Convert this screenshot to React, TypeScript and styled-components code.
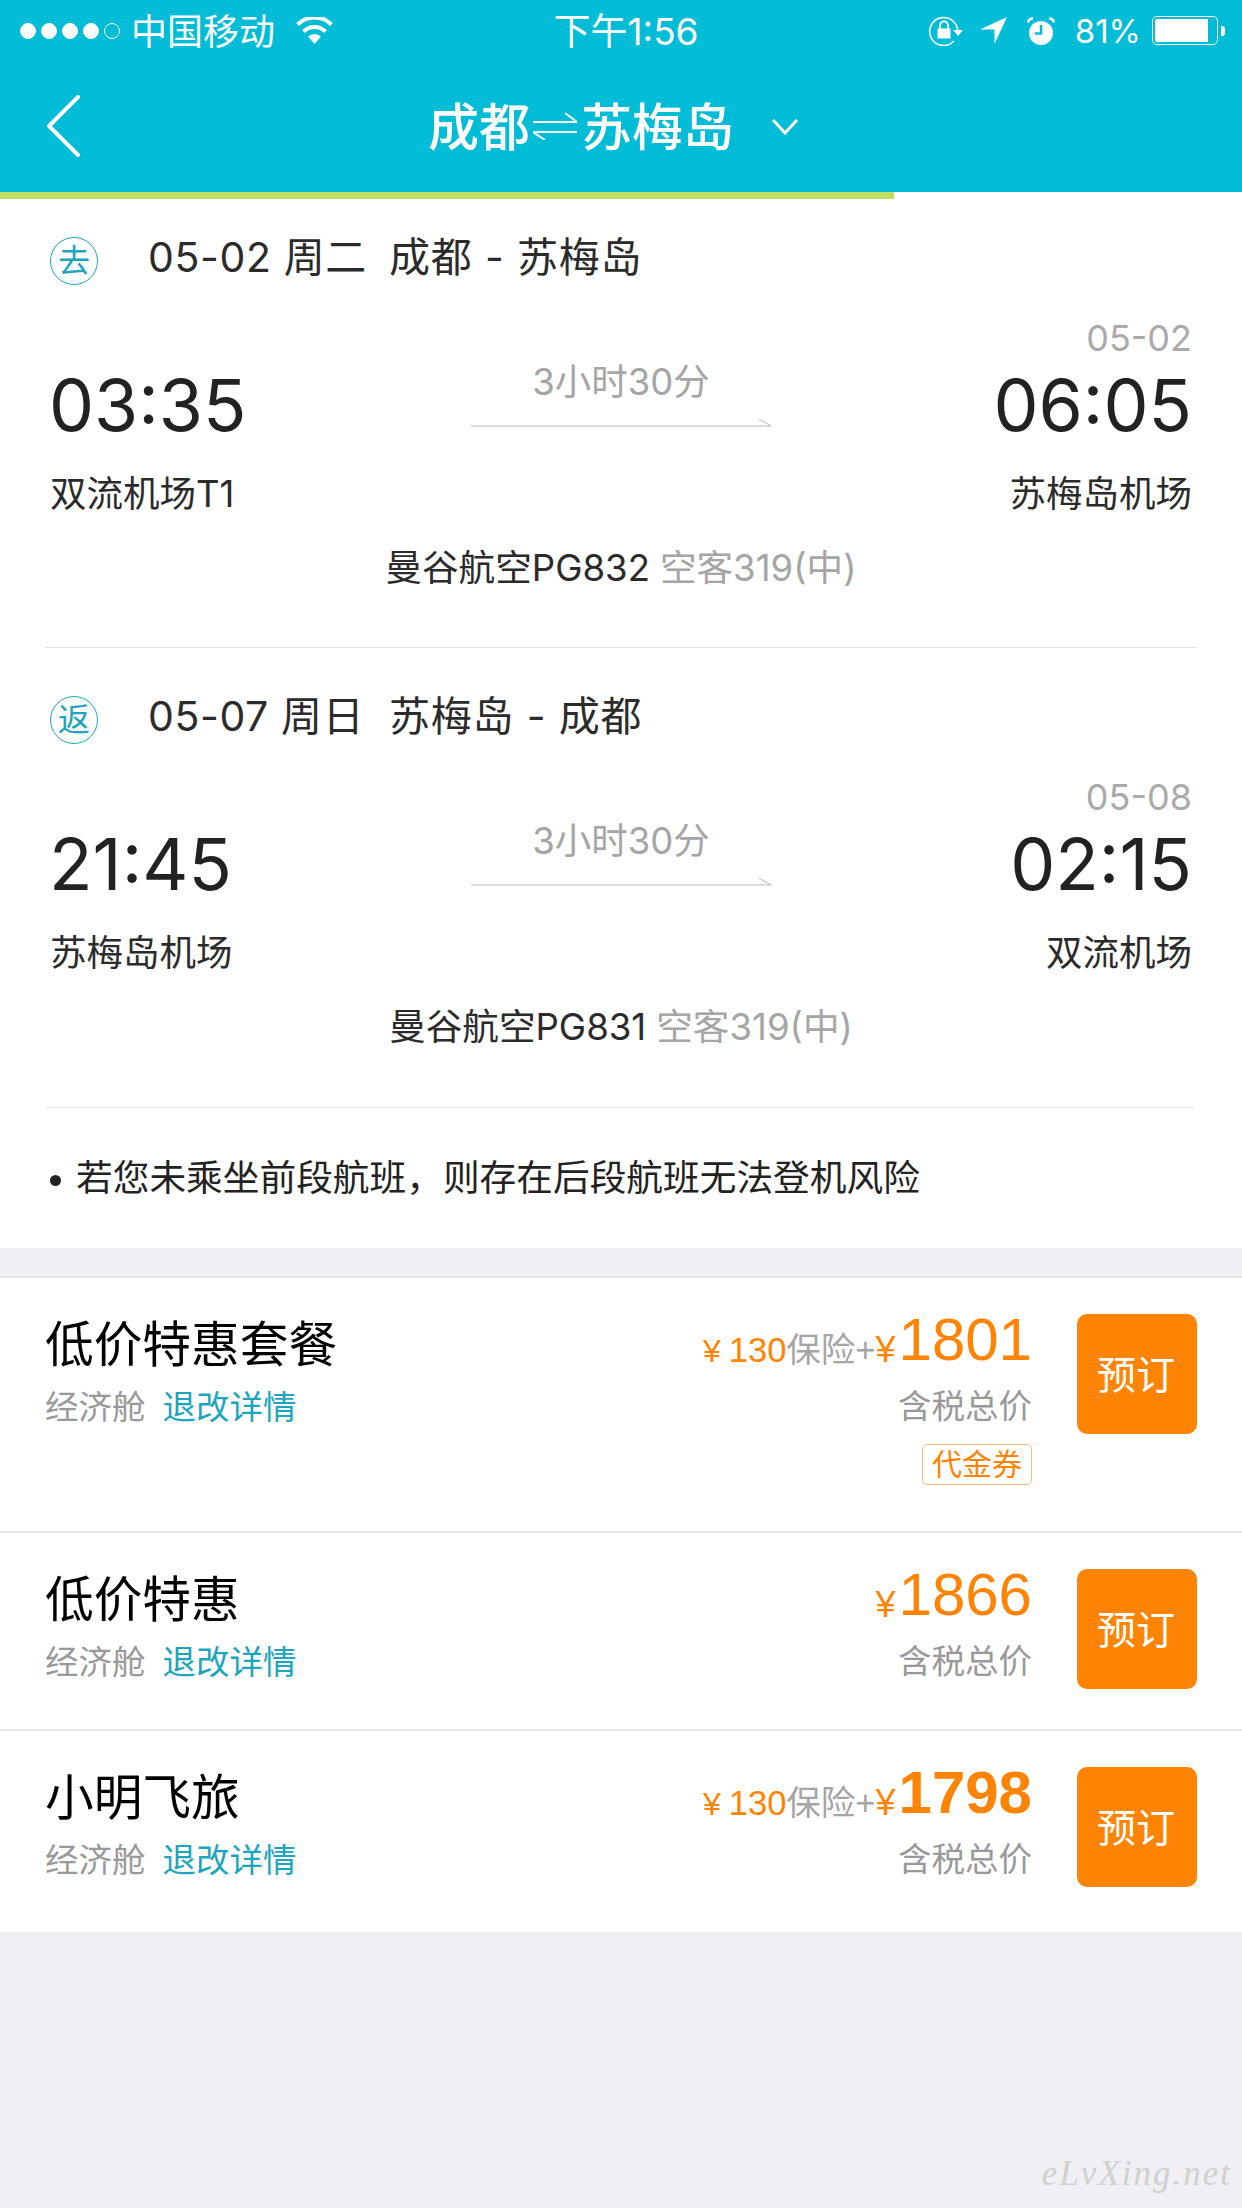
import styled, { createGlobalStyle } from 'styled-components';

const FONT = 'Inter, "Noto Sans CJK SC", sans-serif';
const PRICE_FONT = '"Liberation Sans", "Noto Sans CJK SC", sans-serif';

const GlobalStyle = createGlobalStyle`
    html, body {
        margin: 0;
        padding: 0;
        background: #efeff4;
    }
    * {
        box-sizing: border-box;
    }
`;

const Page = styled.div`
    position: relative;
    width: 1242px;
    height: 2208px;
    overflow: hidden;
    background: #efeff4;
    font-family: ${FONT};
    color: #222;
`;

const Header = styled.header`
    height: 192px;
    background: #00bcd6;
    color: #fff;
`;

const StatusBar = styled.div`
    height: 64px;
    display: grid;
    grid-template-columns: 1fr auto 1fr;
    align-items: center;
    padding-bottom: 3px;
    font-size: 36px;
`;

const StatusLeft = styled.div`
    display: flex;
    align-items: center;
    padding-left: 20px;
`;

const Dots = styled.div`
    display: flex;
    gap: 5px;
    margin-right: 11px;
`;

const Dot = styled.span<{ $empty?: boolean }>`
    width: 16px;
    height: 16px;
    border-radius: 50%;
    border: 1px solid #fff;
    background: ${props => (props.$empty ? 'transparent' : '#fff')};
`;

const Carrier = styled.span`
    margin: 0 21px 4px 0;
`;

const StatusTime = styled.div`
    padding-left: 10px;
    margin-bottom: 4px;
    font-size: 37px;
`;

const StatusRight = styled.div`
    display: flex;
    align-items: center;
    justify-content: flex-end;
    padding-right: 17px;
`;

const Percent = styled.span`
    font-size: 33px;
    margin: 0 11px 0 20px;
`;

const Battery = styled.div`
    width: 66px;
    height: 29px;
    border: 1px solid #fff;
    border-radius: 5px;
    padding: 2px;
    margin-right: 3px;
`;

const BatteryFill = styled.div`
    width: 53px;
    height: 100%;
    background: #fff;
    border-radius: 2px 0 0 2px;
`;

const BatteryNub = styled.div`
    width: 4px;
    height: 10px;
    background: #fff;
    border-radius: 0 3px 3px 0;
`;

const NavBar = styled.div`
    height: 128px;
    display: flex;
    align-items: center;
    padding: 0 0 4px 46px;
`;

const Title = styled.div`
    display: flex;
    align-items: center;
    margin-left: 348px;
    font-size: 51px;
    font-weight: 500;
`;

const TitleText = styled.span`
    margin-bottom: 5px;
`;

const TitleArrows = styled.svg`
    width: 44px;
    height: 28px;
    margin: 0 4px 0 3px;
`;

const TitleCaret = styled.svg`
    width: 28px;
    height: 17px;
    margin-left: 37px;
`;

const ProgressTrack = styled.div`
    height: 7px;
    background: #fff;
`;

const ProgressFill = styled.div`
    width: 894px;
    height: 100%;
    background: #bfdf62;
`;

const FlightPanel = styled.section`
    background: #fff;
    height: 1049px;
`;

const Leg = styled.div<{ $height: number; $top: number }>`
    height: ${props => props.$height}px;
    padding: ${props => props.$top}px 50px 0;
`;

const LegDivider = styled.div<{ $left: number; $right: number }>`
    height: 1px;
    margin: 0 ${props => props.$right}px 0 ${props => props.$left}px;
    background: #e2e2e2;
`;

const DateRow = styled.div`
    height: 122px;
    display: flex;
    align-items: center;
    padding-bottom: 12px;
    font-size: 41px;
    color: #2b2b2b;
`;

const Badge = styled.span`
    width: 48px;
    height: 48px;
    flex: none;
    display: flex;
    align-items: center;
    justify-content: center;
    margin: 14px 50px 0 0;
    border: 1.5px solid #1ca5bc;
    border-radius: 50%;
    color: #1ca5bc;
    font-size: 32px;
    line-height: 1;
`;

const DateText = styled.span`
    width: 241px;
    letter-spacing: 0.6px;
    white-space: pre;
`;

const RouteText = styled.span`
    white-space: pre;
    letter-spacing: 0.8px;
`;

const TimesRow = styled.div`
    display: grid;
    grid-template-columns: 1fr 301px 1fr;
    height: 212px;
`;

const TimeBlock = styled.div<{ $right?: boolean }>`
    display: flex;
    flex-direction: column;
    align-items: ${props => (props.$right ? 'flex-end' : 'flex-start')};
`;

const ArrivalDay = styled.div`
    height: 34px;
    line-height: 34px;
    font-size: 36px;
    color: #aaa;
`;

const Clock = styled.div`
    height: 76px;
    margin: 12px 0 0 -1px;
    line-height: 76px;
    font-size: 71.5px;
    color: #222;
`;

const Airport = styled.div`
    margin-top: 26px;
    height: 50px;
    line-height: 50px;
    font-size: 36.5px;
    color: #2b2b2b;
`;

const DurationBlock = styled.div`
    display: flex;
    flex-direction: column;
    align-items: center;
    padding-top: 39px;
`;

const Duration = styled.div`
    height: 44px;
    line-height: 44px;
    font-size: 36.5px;
    color: #a5a5a5;
`;

const DurationArrow = styled.svg`
    width: 301px;
    height: 10px;
    margin-top: 13px;
`;

const FlightInfo = styled.div`
    height: 50px;
    line-height: 50px;
    margin-top: 10px;
    text-align: center;
    font-size: 36.6px;
    color: #2b2b2b;
`;

const FlightPlane = styled.span`
    color: #a5a5a5;
    margin-left: 10px;
`;

const Notice = styled.div`
    display: flex;
    align-items: center;
    height: 139px;
    padding: 0 0 5px 50px;
    font-size: 36.7px;
    color: #222;
`;

const NoticeDot = styled.span`
    width: 11px;
    height: 11px;
    border-radius: 50%;
    background: #222;
    margin: 10px 15px 0 0;
`;

const FareList = styled.section`
    margin-top: 28px;
    background: #fff;
    border-top: 2px solid #e4e4e4;
`;

const FareRow = styled.div<{ $height: number; $last?: boolean }>`
    height: ${props => props.$height}px;
    display: flex;
    justify-content: space-between;
    padding: 36px 45px 0 45px;
    border-bottom: ${props => (props.$last ? 'none' : '2px solid #e4e4e4')};
`;

const FareInfo = styled.div`
    display: flex;
    flex-direction: column;
    margin-top: 2px;
`;

const FareName = styled.div`
    height: 58px;
    line-height: 58px;
    font-size: 48.7px;
    color: #000;
`;

const FareMeta = styled.div`
    margin-top: 11px;
    height: 44px;
    line-height: 44px;
    font-size: 33.5px;
    color: #999;
`;

const FareLink = styled.span`
    margin-left: 17px;
    color: #1ca5bc;
`;

const FareSide = styled.div`
    display: flex;
    gap: 45px;
`;

const PriceBlock = styled.div`
    display: flex;
    flex-direction: column;
    align-items: flex-end;
`;

const PriceLine = styled.div`
    height: 58px;
    margin-top: -1px;
    display: flex;
    align-items: baseline;
    font-family: ${PRICE_FONT};
    font-size: 34.5px;
    line-height: 58px;
    color: #ff8403;
`;

const Insurance = styled.span`
    color: #a5a5a5;
`;

const Yen = styled.span`
    font-size: 32px;
    margin-right: 8px;
`;

const AmountYen = styled.span`
    font-size: 36px;
    margin-right: 3px;
`;

const Amount = styled.span<{ $bold?: boolean }>`
    font-size: 60px;
    font-weight: ${props => (props.$bold ? 700 : 400)};
    transform: translateY(-2px);
`;

const PriceNote = styled.div`
    margin-top: 13px;
    height: 44px;
    line-height: 44px;
    font-size: 33.5px;
    color: #999;
`;

const Voucher = styled.span`
    margin-top: 16px;
    width: 110px;
    height: 41px;
    line-height: 38px;
    text-align: center;
    border: 1px solid #ffb980;
    border-radius: 5px;
    font-size: 30px;
    color: #ff8403;
`;

const BookButton = styled.button`
    width: 120px;
    height: 120px;
    padding: 0 2px 4px 0;
    border: none;
    border-radius: 10px;
    background: #ff8403;
    color: #fff;
    font-family: ${FONT};
    font-size: 39px;
`;

const Watermark = styled.div`
    position: absolute;
    right: 10px;
    bottom: 14px;
    font-family: 'Liberation Serif', serif;
    font-style: italic;
    font-size: 35px;
    letter-spacing: 2px;
    color: #d0d0d0;
`;

const legs = [
    {
        badge: '去',
        date: '05-02 周二',
        route: '成都 - 苏梅岛',
        depart: '03:35',
        from: '双流机场T1',
        arriveDay: '05-02',
        arrive: '06:05',
        to: '苏梅岛机场',
        flight: '曼谷航空PG832',
        height: 448,
        top: 0,
        dividerLeft: 45,
        dividerRight: 45,
    },
    {
        badge: '返',
        date: '05-07 周日',
        route: '苏梅岛 - 成都',
        depart: '21:45',
        from: '苏梅岛机场',
        arriveDay: '05-08',
        arrive: '02:15',
        to: '双流机场',
        flight: '曼谷航空PG831',
        height: 459,
        top: 10,
        dividerLeft: 46,
        dividerRight: 48,
    },
];

const fares = [
    { name: '低价特惠套餐', insurance: true, price: '1801', voucher: true, height: 255 },
    { name: '低价特惠', insurance: false, price: '1866', voucher: false, height: 198 },
    { name: '小明飞旅', insurance: true, price: '1798', bold: true, voucher: false, height: 201 },
];

const WifiIcon = () => (
    <svg width="37" height="27" viewBox="0 0 37 27">
        <path d="M18.5 27l-6.5-7.5a9.5 9.5 0 0 1 13 0z" fill="#fff" />
        <path d="M7.5 14.5a15.5 15.5 0 0 1 22 0M1.5 7.5a24 24 0 0 1 34 0" fill="none" stroke="#fff" strokeWidth="4" />
    </svg>
);

const RotationIcon = () => (
    <svg width="35" height="31" viewBox="0 0 35 31" style={{ marginRight: 17 }}>
        <path d="M29.5 19A14 14 0 1 0 26 26" fill="none" stroke="#fff" strokeWidth="1.6" />
        <path d="M25 15h10l-5 6z" fill="#fff" />
        <rect x="9.5" y="13.5" width="13" height="10" fill="#fff" />
        <path d="M12 14v-3.500a4 4 0 0 1 8 0V14" fill="none" stroke="#fff" strokeWidth="2" />
    </svg>
);

const LocationIcon = () => (
    <svg width="27" height="27" viewBox="0 0 27 27" style={{ marginRight: 20 }}>
        <path d="M27 0L14.500 27V12.500H0z" fill="#fff" />
    </svg>
);

const AlarmIcon = () => (
    <svg width="28" height="28" viewBox="0 0 28 28">
        <circle cx="14" cy="16" r="12" fill="#fff" />
        <path d="M1 5.500a5 5 0 0 1 5-4M27 5.500a5 5 0 0 0-5-4" fill="none" stroke="#fff" strokeWidth="2.500" />
        <path d="M14 8v8.500H8" fill="none" stroke="#00bcd6" strokeWidth="2.500" />
    </svg>
);

const App = () => {
    return (
        <Page>
            <GlobalStyle />
            <Header>
                <StatusBar>
                    <StatusLeft>
                        <Dots>
                            <Dot />
                            <Dot />
                            <Dot />
                            <Dot />
                            <Dot $empty />
                        </Dots>
                        <Carrier>中国移动</Carrier>
                        <WifiIcon />
                    </StatusLeft>
                    <StatusTime>下午1:56</StatusTime>
                    <StatusRight>
                        <RotationIcon />
                        <LocationIcon />
                        <AlarmIcon />
                        <Percent>81%</Percent>
                        <Battery>
                            <BatteryFill />
                        </Battery>
                        <BatteryNub />
                    </StatusRight>
                </StatusBar>
                <NavBar>
                    <svg width="34" height="62" viewBox="0 0 34 62">
                        <path d="M32 2L3 31l29 29" fill="none" stroke="#fff" strokeWidth="4" strokeLinecap="round" strokeLinejoin="round" />
                    </svg>
                    <Title>
                        <TitleText>成都</TitleText>
                        <TitleArrows viewBox="0 0 44 28">
                            <path d="M0 10h44L32 1M44 20H0l12 8" fill="none" stroke="#fff" strokeWidth="2" />
                        </TitleArrows>
                        <TitleText>苏梅岛</TitleText>
                        <TitleCaret viewBox="0 0 28 17">
                            <path d="M2 2l12 13L26 2" fill="none" stroke="#fff" strokeWidth="3" />
                        </TitleCaret>
                    </Title>
                </NavBar>
            </Header>
            <ProgressTrack>
                <ProgressFill />
            </ProgressTrack>
            <FlightPanel>
                {legs.map(leg => (
                    <div key={leg.badge}>
                        <Leg $height={leg.height} $top={leg.top}>
                            <DateRow>
                                <Badge>{leg.badge}</Badge>
                                <DateText>{leg.date}</DateText>
                                <RouteText>{leg.route}</RouteText>
                            </DateRow>
                            <TimesRow>
                                <TimeBlock>
                                    <ArrivalDay />
                                    <Clock>{leg.depart}</Clock>
                                    <Airport>{leg.from}</Airport>
                                </TimeBlock>
                                <DurationBlock>
                                    <Duration>3小时30分</Duration>
                                    <DurationArrow viewBox="0 0 301 10">
                                        <path d="M0 9h300L288 2" fill="none" stroke="#bbb" strokeWidth="1" />
                                    </DurationArrow>
                                </DurationBlock>
                                <TimeBlock $right>
                                    <ArrivalDay>{leg.arriveDay}</ArrivalDay>
                                    <Clock>{leg.arrive}</Clock>
                                    <Airport>{leg.to}</Airport>
                                </TimeBlock>
                            </TimesRow>
                            <FlightInfo>
                                {leg.flight}
                                <FlightPlane>空客319(中)</FlightPlane>
                            </FlightInfo>
                        </Leg>
                        <LegDivider $left={leg.dividerLeft} $right={leg.dividerRight} />
                    </div>
                ))}
                <Notice>
                    <NoticeDot />
                    若您未乘坐前段航班，则存在后段航班无法登机风险
                </Notice>
            </FlightPanel>
            <FareList>
                {fares.map((fare, index) => (
                    <FareRow key={fare.name} $height={fare.height} $last={index === fares.length - 1}>
                        <FareInfo>
                            <FareName>{fare.name}</FareName>
                            <FareMeta>
                                经济舱
                                <FareLink>退改详情</FareLink>
                            </FareMeta>
                        </FareInfo>
                        <FareSide>
                            <PriceBlock>
                                <PriceLine>
                                    {fare.insurance && (
                                        <>
                                            <Yen>¥</Yen>130
                                            <Insurance>保险+</Insurance>
                                        </>
                                    )}
                                    <AmountYen>¥</AmountYen>
                                    <Amount $bold={fare.bold}>{fare.price}</Amount>
                                </PriceLine>
                                <PriceNote>含税总价</PriceNote>
                                {fare.voucher && <Voucher>代金券</Voucher>}
                            </PriceBlock>
                            <BookButton>预订</BookButton>
                        </FareSide>
                    </FareRow>
                ))}
            </FareList>
            <Watermark>eLvXing.net</Watermark>
        </Page>
    );
};

export default App;
